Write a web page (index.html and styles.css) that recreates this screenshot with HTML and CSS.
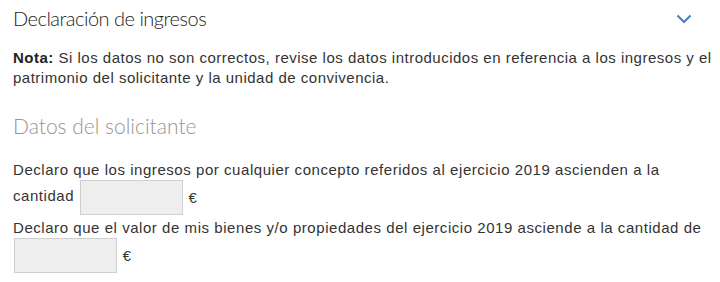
FILE: index.html
```html
<!DOCTYPE html>
<html lang="es">
<head>
<meta charset="utf-8">
<link rel="stylesheet" href="styles.css">
</head>
<body>
<div class="page">
  <div class="section-head">
    <h2 class="title">Declaración de ingresos</h2>
    <svg class="chevron" width="16" height="10" viewBox="0 0 16 10"><path d="M1.5 1.5 L8 8 L14.5 1.5" fill="none" stroke="#4a7cc0" stroke-width="2"/></svg>
  </div>
  <p class="note"><b>Nota:</b> Si los datos no son correctos, revise los datos introducidos en referencia a los ingresos y el patrimonio del solicitante y la unidad de convivencia.</p>
  <h3 class="subtitle">Datos del solicitante</h3>
  <p class="field">Declaro que los ingresos por cualquier concepto referidos al ejercicio 2019 ascienden a la cantidad <span class="box"></span> <span class="cur">€</span></p>
  <p class="field">Declaro que el valor de mis bienes y/o propiedades del ejercicio 2019 asciende a la cantidad de <span class="box"></span> <span class="cur">€</span></p>
</div>
</body>
</html>
```
FILE: styles.css
```css
html, body {
  margin: 0;
  padding: 0;
  background: #fff;
}
.page {
  padding: 0 6px 0 13px;
  font-family: "Liberation Sans", Arial, sans-serif;
  font-size: 15px;
  letter-spacing: 0.55px;
  color: #333;
}
.section-head {
  display: flex;
  align-items: center;
  justify-content: space-between;
  height: 36px;
  padding-right: 22px;
}
.title {
  margin: 0;
  font-family: Lato, "Liberation Sans", sans-serif;
  font-weight: 300;
  font-size: 20px;
  letter-spacing: -0.5px;
  color: #222;
  line-height: 36px;
}
.chevron {
  display: block;
  margin-top: 2px;
}
.note {
  margin: 12px 0 0;
  line-height: 20px;
  letter-spacing: 0.5px;
}
.note b {
  font-weight: bold;
  color: #222;
}
.subtitle {
  margin: 24px 0 0;
  font-family: Lato, "Liberation Sans", sans-serif;
  font-weight: 300;
  font-size: 21px;
  letter-spacing: 0;
  color: #959595;
  line-height: 28px;
}
.field {
  margin: 20px 0 0;
  line-height: 20px;
  padding-right: 8px;
}
.field + .field {
  margin-top: 3px;
}
.box {
  display: inline-block;
  vertical-align: middle;
  width: 101px;
  height: 33px;
  border: 1px solid #cfcfcf;
  background: #eeeeee;
  margin: 0 1px 0 1px;
}
.cur {
  vertical-align: middle;
}
```
